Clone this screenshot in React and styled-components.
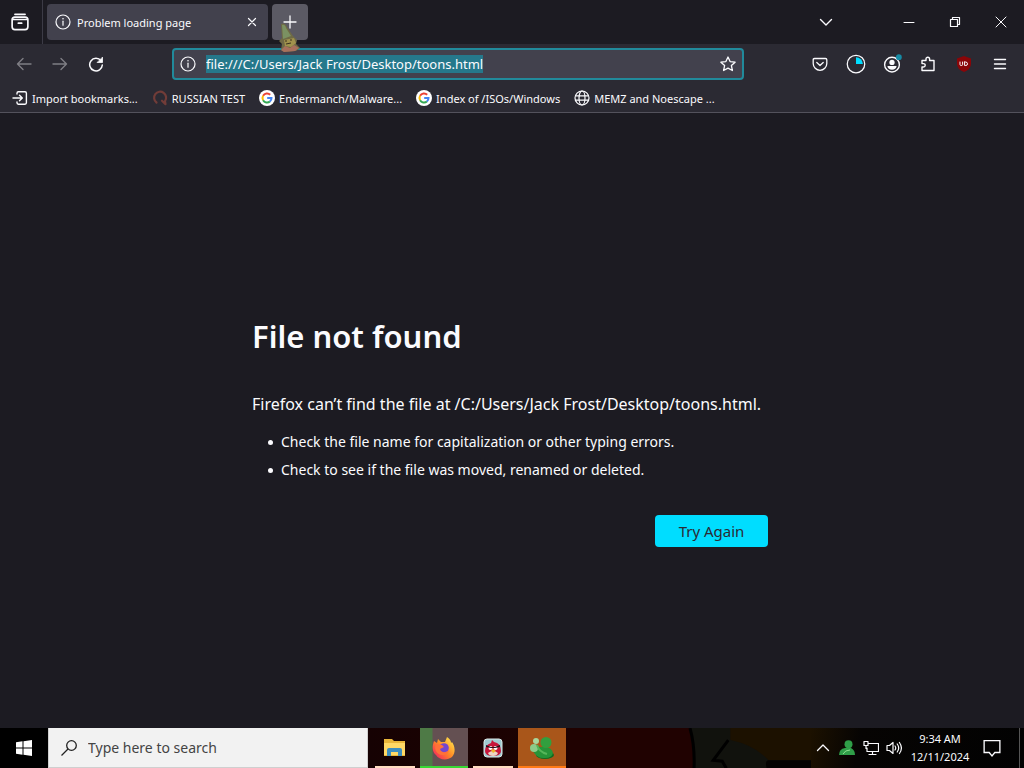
import React, { useEffect, useRef } from "react";

import styled, { createGlobalStyle } from "styled-components";

const theme = {
  frame: "#1c1b22",
  toolbar: "#2b2a33",
  field: "#42414d",
  text: "#fbfbfe",
  accent: "#00ddff",
};

const GlobalStyle = createGlobalStyle`
  * {
    box-sizing: border-box;
  }

  body {
    margin: 0;
    background: ${theme.frame};
    color: ${theme.text};
    font-family: "Noto Sans", "Open Sans", sans-serif;
    font-size: 11px;
  }

  button,
  input {
    font: inherit;
    color: inherit;
  }
`;

const Desktop = styled.div`
  min-height: 100vh;
  display: flex;
  flex-direction: column;
`;

const TabBar = styled.header`
  height: 44px;
  display: flex;
  align-items: center;
`;

const IconButton = styled.button`
  width: ${(props) => props.$width || 36}px;
  height: ${(props) => props.$height || 36}px;
  flex: none;
  display: flex;
  align-items: center;
  justify-content: center;
  padding: 0;
  border: none;
  border-radius: 4px;
  background: ${(props) => props.$background || "none"};
  opacity: ${(props) => (props.disabled ? 0.4 : 1)};
`;

const ViewSlot = styled.div`
  width: 43px;
  height: 44px;
  display: flex;
  align-items: center;
  padding-left: 2px;
  border-right: 1px solid #3c3b46;
`;

const Tab = styled.div`
  width: 221px;
  height: 36px;
  margin: 0 4px;
  display: flex;
  align-items: center;
  gap: 6px;
  padding: 0 4px 0 8px;
  border-radius: 4px;
  background: ${theme.field};

  span {
    flex: 1;
    white-space: nowrap;
  }
`;

const WindowButtons = styled.div`
  margin-left: 42px;
  display: flex;
`;

const Spacer = styled.div`
  flex: 1;
`;

const Toolbar = styled.nav`
  height: 40px;
  display: flex;
  align-items: center;
  padding: 0 6px;
  background: ${theme.toolbar};
`;

const UrlBar = styled.label`
  flex: 1;
  height: 32px;
  margin: 0 58px;
  display: flex;
  align-items: center;
  gap: 10px;
  padding: 0 6px;
  border: 2px solid #218a9b;
  border-radius: 4px;
  background: ${theme.field};
`;

const UrlInput = styled.input`
  flex: 1;
  min-width: 0;
  padding: 0;
  border: none;
  outline: none;
  background: none;
  font-size: 13px;

  &::selection {
    background: #25788b;
    color: ${theme.text};
  }
`;

const Bookmarks = styled.nav`
  height: 29px;
  display: flex;
  align-items: center;
  gap: 14px;
  padding: 0 12px;
  border-bottom: 1px solid #53525c;
  background: ${theme.toolbar};

  a {
    display: flex;
    align-items: center;
    gap: 4px;
    color: inherit;
    text-decoration: none;
    white-space: nowrap;
  }
`;

const Page = styled.main`
  flex: 1;
  display: flex;
  flex-direction: column;
  align-items: center;
  justify-content: center;
  padding: 0 24px;
`;

const ErrorBox = styled.section`
  width: 100%;
  max-width: 520px;
  padding-top: 18px;
  display: flex;
  flex-direction: column;

  h1 {
    margin: 0 0 32px;
    font-size: 31px;
    font-weight: 600;
    line-height: 48px;
  }

  p {
    margin: 0 0 12px;
    font-size: 16px;
    line-height: 24px;
  }

  ul {
    margin: 0;
    padding-left: 16px;
    list-style: none;
    font-size: 14px;
    line-height: 28px;
  }

  li {
    display: flex;
    align-items: center;
    gap: 8px;
  }

  li::before {
    content: "";
    width: 5px;
    height: 5px;
    border-radius: 50%;
    background: currentColor;
  }
`;

const TryAgain = styled.button`
  align-self: flex-end;
  width: 113px;
  height: 32px;
  margin: 31px 4px 0 0;
  border: none;
  border-radius: 4px;
  background: ${theme.accent};
  color: #2b2a33;
  font-size: 15px;
`;

const Taskbar = styled.footer`
  height: 40px;
  display: flex;
  background: linear-gradient(90deg, #000 48px, #160203 368px, #200201 600px, #200201 686px, #000 692px);
`;

const Search = styled.label`
  width: 320px;
  display: flex;
  align-items: center;
  gap: 11px;
  padding: 0 12px;
  background: #f2f2f2;
  border: 1px solid #cfcfcf;
  border-top: none;

  input {
    flex: 1;
    min-width: 0;
    padding: 0;
    border: none;
    outline: none;
    background: none;
    color: #222;
    font-size: 14px;
  }

  input::placeholder {
    color: #444;
    opacity: 1;
  }
`;

const Apps = styled.div`
  display: flex;
  gap: 1px;
  padding: 0 3px;
`;

const AppButton = styled.button`
  width: 48px;
  height: 40px;
  display: flex;
  align-items: center;
  justify-content: center;
  padding: 0;
  border: none;
  background:
    linear-gradient(${(props) => props.$line}, ${(props) => props.$line}) bottom /
      ${(props) => (props.$background ? 48 : 40)}px 2px no-repeat,
    ${(props) => props.$background || "none"};
`;

const Wallpaper = styled.svg`
  flex: 1;
  min-width: 0;
  height: 40px;
`;

const Tray = styled.div`
  display: flex;
  align-items: center;
  background: linear-gradient(100deg, #1c1100, #060403 50px, #020202);
`;

const Clock = styled.time`
  width: 70px;
  text-align: center;
  line-height: 18px;
  white-space: nowrap;
`;

const ShowDesktop = styled.button`
  width: 5px;
  height: 40px;
  margin-left: 10px;
  padding: 0;
  border: none;
  border-left: 1px solid #555;
  background: none;
`;

const Cursor = styled.svg`
  position: absolute;
  left: 278px;
  top: 23px;
  pointer-events: none;
`;

const Icon = ({ size = 16, width = 1.4, children }) => (
  <svg
    width={size}
    height={size}
    viewBox="0 0 16 16"
    fill="none"
    stroke="currentColor"
    strokeWidth={width}
    strokeLinecap="round"
    strokeLinejoin="round"
    aria-hidden="true"
  >
    {children}
  </svg>
);

const InfoIcon = () => (
  <Icon width={1.2}>
    <circle cx="8" cy="8" r="7" />
    <path d="M8 7.2v4" />
    <path d="M8 4.7v.1" strokeWidth="1.6" />
  </Icon>
);

const GoogleIcon = () => (
  <svg width="16" height="16" viewBox="0 0 16 16" fill="none" strokeWidth="2" aria-hidden="true">
    <circle cx="8" cy="8" r="8" fill="#fff" />
    <path d="M11.2 4.8A4.5 4.5 0 0 0 4.1 5.8" stroke="#ea4335" />
    <path d="M4.1 5.8a4.5 4.5 0 0 0 0 4.4" stroke="#fbbc05" />
    <path d="M4.1 10.2a4.5 4.5 0 0 0 6.8 1.3" stroke="#34a853" />
    <path d="M10.9 11.5A4.5 4.5 0 0 0 12.5 8H8.2" stroke="#4285f4" />
  </svg>
);

const ImportIcon = () => (
  <Icon>
    <path d="M5 4V3.2C5 2.3 5.5 1.8 6.4 1.8H13c.9 0 1.4.5 1.4 1.4v9.6c0 .9-.5 1.4-1.4 1.4H6.4c-.9 0-1.4-.5-1.4-1.4V12M1 8h9M7.5 5.2 10.3 8l-2.8 2.8" />
  </Icon>
);

const RussianIcon = () => (
  <Icon width={2.2}>
    <path d="M4.5 12.5a6 6 0 1 1 8.5-1.3l.5 3-3.5-3.5" stroke="#713c38" />
  </Icon>
);

const GlobeIcon = () => (
  <Icon width={1.2}>
    <circle cx="8" cy="8" r="7" />
    <ellipse cx="8" cy="8" rx="3" ry="7" />
    <path d="M1.5 5.8h13M1.5 10.2h13" />
  </Icon>
);

const bookmarks = [
  { title: "Import bookmarks...", icon: <ImportIcon /> },
  { title: "RUSSIAN TEST", icon: <RussianIcon /> },
  { title: "Endermanch/Malware...", icon: <GoogleIcon /> },
  { title: "Index of /ISOs/Windows", icon: <GoogleIcon /> },
  { title: "MEMZ and Noescape ...", icon: <GlobeIcon /> },
];

const FolderIcon = () => (
  <svg width="24" height="24" viewBox="0 0 24 24" aria-hidden="true">
    <path d="M1 3h8l2 2h11v15H1z" fill="#e9b63a" />
    <path d="M1 7h21v12H1z" fill="#ffd966" />
    <path d="M4 20v-6q0-2 2-2h11q2 0 2 2v6h-4v-4H8v4z" fill="#3e8ebf" />
  </svg>
);

const FirefoxIcon = () => (
  <svg width="26" height="26" viewBox="0 0 26 26" aria-hidden="true">
    <defs>
      <linearGradient id="fox" x1="1" y1="0" x2="0" y2="1">
        <stop offset="0.1" stopColor="#ffe14a" />
        <stop offset="0.5" stopColor="#ff8a25" />
        <stop offset="0.9" stopColor="#f5265f" />
      </linearGradient>
    </defs>
    <path
      d="M3 6l3 2 1-4 3 3 4 0 2-5c3 2 4 4 4 6l1-1c3 4 4 11 0 15-5 4-13 3-16-2C1 17 1 11 3 6z"
      fill="url(#fox)"
    />
    <circle cx="13" cy="13" r="4.8" fill="#7446ce" />
    <path d="M5 9l6 1 2 2-4 2c1 4 6 4 9 1-1 6-10 7-13 1-1-2-1-4 0-7z" fill="#ff7139" />
  </svg>
);

const BirdIcon = () => (
  <svg width="20" height="20" viewBox="0 0 20 20" aria-hidden="true">
    <rect x="1" y="1" width="18" height="18" rx="3" fill="#9fcbd2" stroke="#dce9e8" />
    <path d="M2 13q0-6 6-8l1-3 2 2q7 1 7 9 0 5-8 5-8 0-8-5z" fill="#c6163b" />
    <path d="M5 15q5-4 10 0-1 3-5 3t-5-3z" fill="#ecd5c4" />
    <circle cx="7.5" cy="10" r="2" fill="#fff" />
    <circle cx="12.5" cy="10" r="2" fill="#fff" />
    <path d="M3 7l5 2h4l5-2v2l-5 1H8L3 9z" fill="#27121a" />
    <path d="M8 12l2-1 3 2-3 2z" fill="#f2b52b" />
  </svg>
);

const MessengerIcon = () => (
  <svg width="26" height="24" viewBox="0 0 26 24" aria-hidden="true">
    <ellipse cx="16" cy="19" rx="9" ry="4" fill="#136a20" />
    <path d="M4 15q2-5 8-4 11-1 12 6-1 5-8 5-8 1-12-7z" fill="#279438" />
    <circle cx="17" cy="6.5" r="5.5" fill="#329f3e" />
    <circle cx="7" cy="5" r="3" fill="#a9d79c" />
    <circle cx="5" cy="12" r="4" fill="#8ccc8a" />
    <path d="M8 9q2 7 10 9" stroke="#55b659" strokeWidth="2" fill="none" />
  </svg>
);

const App = () => {
  const urlRef = useRef(null);

  // Select the whole address, like a freshly focused url bar
  useEffect(() => {
    urlRef.current.focus();
    urlRef.current.select();
  }, []);

  return (
    <Desktop>
      <GlobalStyle />
      <TabBar>
        <ViewSlot>
          <IconButton aria-label="Firefox View">
            <Icon size={18} width={1.5}>
              <path d="M3.5 1.2h9" />
              <rect x="1" y="3.7" width="14" height="11" rx="2.5" />
              <path d="M1.5 5.8h13M6.5 9h3" />
            </Icon>
          </IconButton>
        </ViewSlot>
        <Tab>
          <InfoIcon />
          <span>Problem loading page</span>
          <IconButton $width={24} $height={24} aria-label="Close tab">
            <Icon width={1.2}>
              <path d="M4.5 4.5l7 7M11.5 4.5l-7 7" />
            </Icon>
          </IconButton>
        </Tab>
        <IconButton $background="#5b5a64" aria-label="New tab">
          <Icon width={1.3}>
            <path d="M8 2v12M2 8h12" />
          </Icon>
        </IconButton>
        <Spacer />
        <IconButton aria-label="List all tabs">
          <Icon>
            <path d="M2.5 5.5 8 11l5.5-5.5" />
          </Icon>
        </IconButton>
        <WindowButtons>
          <IconButton $width={46} aria-label="Minimize">
            <Icon width={1}>
              <path d="M3 8.5h10" />
            </Icon>
          </IconButton>
          <IconButton $width={46} aria-label="Restore">
            <Icon width={1.2}>
              <path d="M3.5 5.5h7v7h-7zM5.5 5.5v-2h7v7h-2" />
            </Icon>
          </IconButton>
          <IconButton $width={46} aria-label="Close">
            <Icon width={1}>
              <path d="M3 3l10 10M13 3 3 13" />
            </Icon>
          </IconButton>
        </WindowButtons>
      </TabBar>

      <Toolbar>
        <IconButton disabled aria-label="Back">
          <Icon>
            <path d="M15 8H1.5M7 2.5 1.5 8 7 13.5" />
          </Icon>
        </IconButton>
        <IconButton disabled aria-label="Forward">
          <Icon>
            <path d="M1 8h13.5M9 2.5 14.5 8 9 13.5" />
          </Icon>
        </IconButton>
        <IconButton aria-label="Reload">
          <Icon width={1.5}>
            <path d="M13 4.8A6.3 6.3 0 1 0 14.3 9" />
            <path d="M14.5 1.5v5h-5z" fill="currentColor" strokeWidth="0.8" />
          </Icon>
        </IconButton>
        <UrlBar>
          <InfoIcon />
          <UrlInput
            ref={urlRef}
            aria-label="Address"
            spellCheck="false"
            defaultValue="file:///C:/Users/Jack Frost/Desktop/toons.html"
          />
          <Icon width={1.3}>
            <path d="M8 1l2.1 4.6 5 .6-3.7 3.4 1 4.9L8 12.1l-4.4 2.4 1-4.9L.9 6.2l5-.6z" />
          </Icon>
        </UrlBar>
        <IconButton aria-label="Save to Pocket">
          <Icon width={1.3}>
            <path d="M2.5 2.5h11q1.3 0 1.3 1.3V7.5a6.8 6.8 0 0 1-13.6 0V3.8q0-1.3 1.3-1.3zM4.8 6.5 8 9.5l3.2-3" />
          </Icon>
        </IconButton>
        <IconButton aria-label="Timer">
          <Icon size={20} width={1}>
            <circle cx="8" cy="8" r="7" />
            <path d="M8 2.5A5.5 5.5 0 0 1 13.5 8H8z" fill="#00ddff" stroke="none" />
          </Icon>
        </IconButton>
        <IconButton aria-label="Account">
          <Icon size={20} width={1.1}>
            <circle cx="8" cy="8.5" r="5.9" />
            <circle cx="8" cy="6.7" r="2.1" fill="currentColor" stroke="none" />
            <path d="M4.3 9.5h7.4q-.5 3-3.7 3t-3.7-3z" fill="currentColor" stroke="none" />
            <circle cx="13.5" cy="2.5" r="2.3" fill="#168ba5" stroke="none" />
          </Icon>
        </IconButton>
        <IconButton aria-label="Extensions">
          <Icon width={1.4}>
            <path d="M2 14.5V11h1.5a1.7 1.7 0 0 0 0-3.4H2V4.5h4V3a1.8 1.8 0 0 1 3.6 0v1.5H14v10z" />
          </Icon>
        </IconButton>
        <IconButton aria-label="uBlock Origin">
          <Icon>
            <path d="M8 0 15 2.5V8q0 5-7 8-7-3-7-8V2.5z" fill="#8a0508" stroke="none" />
            <path d="M4 6v2.5q0 1 1.3 1T6.6 8.5V6M8.6 6v3.5h1.2q1.7 0 1.7-1.7T9.8 6z" strokeWidth="1" />
          </Icon>
        </IconButton>
        <IconButton aria-label="Menu">
          <Icon width={1.4}>
            <path d="M2.5 3.5h11M2.5 8h11M2.5 12.5h11" />
          </Icon>
        </IconButton>
      </Toolbar>

      <Bookmarks>
        {bookmarks.map((item) => (
          <a href="#" key={item.title}>
            {item.icon}
            {item.title}
          </a>
        ))}
      </Bookmarks>

      <Page>
        <ErrorBox>
          <h1>File not found</h1>
          <p>Firefox can’t find the file at /C:/Users/Jack Frost/Desktop/toons.html.</p>
          <ul>
            <li>Check the file name for capitalization or other typing errors.</li>
            <li>Check to see if the file was moved, renamed or deleted.</li>
          </ul>
          <TryAgain>Try Again</TryAgain>
        </ErrorBox>
      </Page>

      <Taskbar>
        <IconButton $width={48} $height={40} aria-label="Start">
          <svg width="16" height="16" viewBox="0 0 16 16" fill="#fff" aria-hidden="true">
            <path d="M0 2.2 6.5 1.3v6.2H0zM7.5 1.2 16 0v7.5H7.5zM0 8.5h6.5v6.2L0 13.8zM7.5 8.5H16V16l-8.5-1.2z" />
          </svg>
        </IconButton>
        <Search>
          <svg width="16" height="16" viewBox="0 0 16 16" fill="none" stroke="#222" strokeWidth="1.3" aria-hidden="true">
            <circle cx="10.5" cy="5.5" r="4.8" />
            <path d="M7 9 .5 15.5" />
          </svg>
          <input aria-label="Search" placeholder="Type here to search" />
        </Search>
        <Apps>
          <AppButton $line="#ffdcc0" aria-label="File Explorer">
            <FolderIcon />
          </AppButton>
          <AppButton
            $line="#38d934"
            $background="linear-gradient(90deg, #4e7a46 12px, #645052 13px)"
            aria-label="Firefox"
          >
            <FirefoxIcon />
          </AppButton>
          <AppButton $line="#ffdcc0" aria-label="Angry Birds">
            <BirdIcon />
          </AppButton>
          <AppButton $line="#ff7a16" $background="#a9561a" aria-label="Messenger">
            <MessengerIcon />
          </AppButton>
        </Apps>
        <Wallpaper viewBox="0 0 240 40" preserveAspectRatio="xMinYMin slice" aria-hidden="true">
          <path d="M0 0h120q5 18 4 40H0z" fill="#200201" />
          <path d="M120 0h120v40H124q1-22-4-40z" fill="#11120d" />
          <path d="M160 0h80v32h-42q-14-15-38-20z" fill="#1c1100" />
          <path d="M120 0q5 18 4 40M158 12l-15 20 9 1 4 7" fill="none" stroke="#000" strokeWidth="3" />
          <path d="M196 40q-2-8 2-8h46v8z" fill="#040302" />
        </Wallpaper>
        <Tray>
          <IconButton $width={24} aria-label="Show hidden icons">
            <Icon width={1.3}>
              <path d="M2.5 10.5 8 5l5.5 5.5" />
            </Icon>
          </IconButton>
          <IconButton $width={24} aria-label="Messenger status">
            <svg width="16" height="16" viewBox="0 0 16 16" fill="#2f9e48" aria-hidden="true">
              <circle cx="9.5" cy="4.3" r="4" />
              <path d="M0 15q0-6 6-7h6q4 2 4 7z" />
              <path d="M4 14q2-4 7-4" stroke="#8ee090" fill="none" />
            </svg>
          </IconButton>
          <IconButton $width={24} aria-label="Network">
            <Icon width={1.2}>
              <path d="M5 3.5h10.5v8H4V8M1 1.5h4v4H1zM3 5.5v3M9.5 11.5v3M6 14.5h7" />
            </Icon>
          </IconButton>
          <IconButton $width={22} aria-label="Volume">
            <Icon width={1.2}>
              <path d="M1 5.5h2.5L7 2.5v11L3.5 10.5H1zM9 6q1.5 2 0 4M11.2 4q3 4 0 8M13.4 2.5q4 5.5 0 11" />
            </Icon>
          </IconButton>
          <Clock>
            9:34 AM
            <br />
            12/11/2024
          </Clock>
          <IconButton $width={34} aria-label="Notifications">
            <Icon size={18} width={1.2}>
              <path d="M1 1.5h14V12h-4.5L8 15l-2.5-3H1z" strokeLinejoin="miter" />
            </Icon>
          </IconButton>
          <ShowDesktop aria-label="Show desktop" />
        </Tray>
      </Taskbar>

      <Cursor width="24" height="30" viewBox="0 0 24 30" aria-hidden="true">
        <path d="M3 1Q7-1 9 4l6 9 4 4-1 4 4 4-4 3-12 1-3-2 1-6-3-3 3-3z" fill="#6f6a45" />
        <path d="M4 2q3-1 4 3l5 8-8 3z" fill="#7b9162" />
        <path d="M6 17l10-2 2 5-5 4-6-1z" fill="#a0924c" />
        <path d="M3 27l4-4 5 2 4-3 5 3-4 3-11 1z" fill="#a8705c" />
        <path d="M8 17v2M13 16v2M8 21l5-1" stroke="#3a3120" fill="none" />
      </Cursor>
    </Desktop>
  );
};

export default App;
